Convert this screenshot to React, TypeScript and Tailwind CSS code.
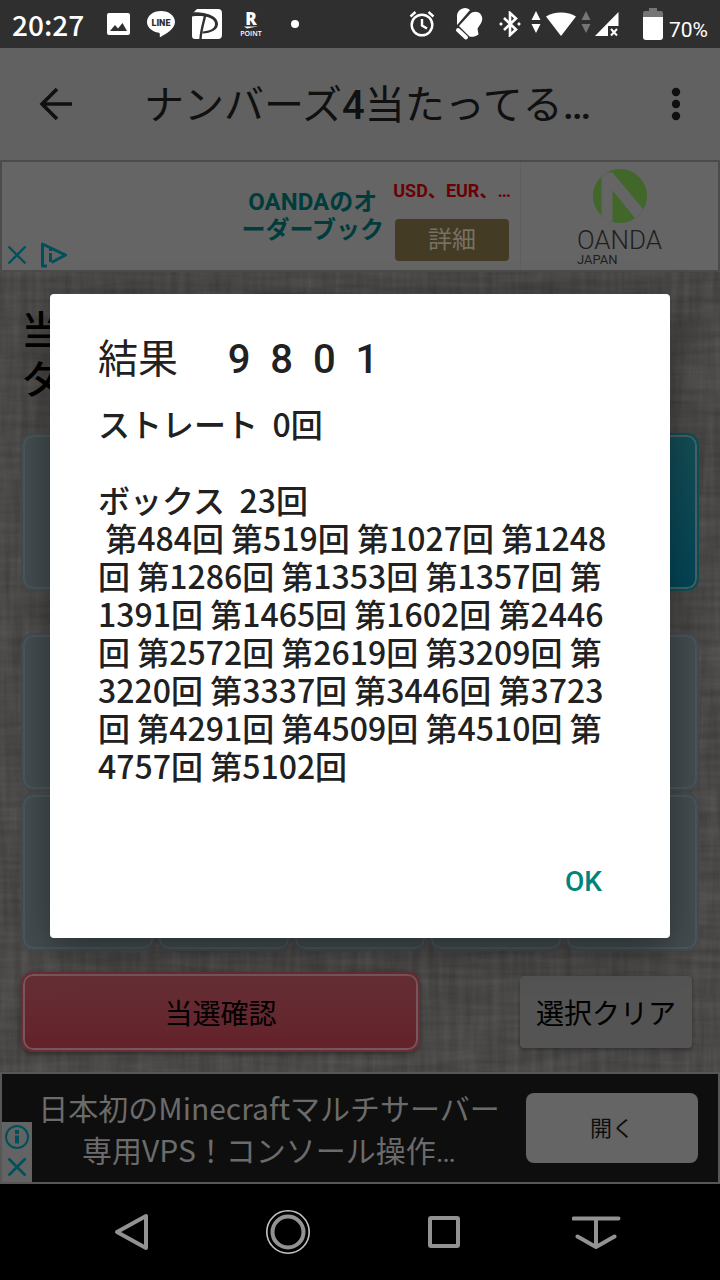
import React from 'react';

const DRAWS = [
  484, 519, 1027, 1248, 1286, 1353, 1357, 1391, 1465, 1602, 2446, 2572,
  2619, 3209, 3220, 3337, 3446, 3723, 4291, 4509, 4510, 4757, 5102,
];

const StatusBar = () => {
  return (
    <div className="flex h-12 items-center bg-[#2f2f2f] px-3 text-white">
      <span className="w-[94px] font-['Noto_Sans_CJK_JP',sans-serif] text-[28px] leading-9 font-medium">20:27</span>

      {/* Notifications */}
      <div className="flex items-center gap-4">
        <svg width="24" height="24" viewBox="0 0 24 24">
          <rect x="1" y="1" width="23" height="22" rx="2" fill="#fff" />
          <path d="M4 19l5-6 3 3.500 4.500-5.500L21 19z" fill="#2f2f2f" />
        </svg>
        <svg width="30" height="28" viewBox="0 0 30 28">
          <path d="M15 1C7 1 1 5.800 1 12c0 5.500 5 9.800 12 10.700 1 .3 1 1.500.7 3.600 0 .6.3.9.9.6C19 24.500 29 19 29 12 29 5.800 23 1 15 1z" fill="#fff" />
          <text x="15" y="15.500" textAnchor="middle" fontFamily="Roboto, sans-serif" fontWeight="900" fontSize="9" fill="#2f2f2f">LINE</text>
        </svg>
        <svg width="30" height="32" viewBox="0 0 30 32">
          <path d="M5 1h21a4 4 0 0 1 4 4v22a4 4 0 0 1-4 4H3a3 3 0 0 1-3-3V6z" fill="#fff" />
          <path d="M0 4.500c12-1 26 3 26 11.500 0 6-7 9-15.500 9.500v-2C17 23 23 21 23 16 23 9.500 11 7 0 8.500z" fill="#2f2f2f" />
          <path d="M13 8C11.500 15 9 22 8.500 31" fill="none" stroke="#2f2f2f" strokeWidth="2.400" />
        </svg>
        <svg width="26" height="32" viewBox="0 0 26 32">
          <text x="13" y="17" textAnchor="middle" fontFamily="Open Sans, sans-serif" fontWeight="800" fontSize="17" fill="#fff">R</text>
          <path d="M6 18.500h14l-11 2z" fill="#fff" />
          <text x="13" y="28" textAnchor="middle" fontFamily="Open Sans, sans-serif" fontWeight="600" fontSize="7" fill="#fff">POINT</text>
        </svg>
        <span className="ml-[11px] size-2 rounded-full bg-white" />
      </div>

      {/* System icons */}
      <div className="ml-auto flex items-center">
        <svg className="mr-5" width="26" height="28" viewBox="0 0 26 28" fill="none" stroke="#fff" strokeWidth="2.400">
          <circle cx="13" cy="15" r="10.300" />
          <path d="M13 9v6.500l5 3M1.500 6.500l5-4.500M24.500 6.500l-5-4.500" />
        </svg>
        <svg className="mr-4" width="28" height="34" viewBox="0 0 28 34" fill="#fff">
          <path d="M2 18V8a8 8 0 0 1 13-5L3 17z" />
          <path d="M4 19L15 7c3-3 8-3 10.500 0 2.500 3 2.200 7 0 10l-3 4.500 1 6c-3 2.500-7 2.500-9 2z" />
          <path d="M3 23l8 7.500" stroke="#fff" strokeWidth="4" strokeLinecap="round" />
        </svg>
        <svg className="mr-2.5" width="22" height="26" viewBox="0 0 22 26" fill="none" stroke="#fff" strokeWidth="2.600">
          <path d="M5 7l12 11.500-6 5.500V2l6 5.500L5 19" />
          <circle cx="2" cy="13" r="1.200" fill="#fff" strokeWidth="0.800" />
          <circle cx="20" cy="13" r="1.200" fill="#fff" strokeWidth="0.800" />
        </svg>
        <svg className="mr-1 -mt-1" width="10" height="22" viewBox="0 0 10 22" fill="#fff">
          <path d="M5 0l4.500 9h-9zM5 22l4.500-9h-9z" />
        </svg>
        <svg className="mr-1" width="32" height="26" viewBox="0 0 32 26" fill="#fff">
          <path d="M1 5.500C9 .2 23 .2 31 5.500L16 25z" />
        </svg>
        <svg className="mr-1 -mt-1" width="10" height="22" viewBox="0 0 10 22" fill="#757575">
          <path d="M5 0l4.500 9h-9zM5 22l4.500-9h-9z" />
        </svg>
        <svg className="mr-6" width="24" height="25" viewBox="0 0 24 25">
          <path d="M23.500 0v14H13v10H0z" fill="#fff" />
          <path d="M16 17l6 6.500M22 17l-6 6.500" stroke="#fff" strokeWidth="2" />
        </svg>
        <svg className="mr-1.5" width="20" height="32" viewBox="0 0 20 32">
          <path d="M6 0h8v3h4a2 2 0 0 1 2 2v5H0V5a2 2 0 0 1 2-2h4z" fill="#757575" />
          <path d="M0 9h20v20a3 3 0 0 1-3 3H3a3 3 0 0 1-3-3z" fill="#fff" />
        </svg>
        <span className="mt-3 font-[Roboto,sans-serif] text-[21px] leading-6">70%</span>
      </div>
    </div>
  );
};

const AppBar = () => {
  return (
    <header className="flex h-28 items-center bg-[#616161] pl-8 pr-5 text-[#101010]">
      <button aria-label="戻る" className="flex size-12 items-center justify-center">
        <svg width="34" height="34" viewBox="0 0 34 34" fill="none" stroke="currentColor" strokeWidth="3.600">
          <path d="M33 17H4M18 2L3 17l15 15" />
        </svg>
      </button>
      <h1 className="ml-16 grow truncate pt-1 font-[Roboto,'Noto_Sans_CJK_JP',sans-serif] text-[40px] leading-[56px]">
        ナンバーズ<span className="font-medium">4</span>当たってる<span className="font-medium">…</span>
      </h1>
      <button aria-label="メニュー" className="flex size-12 items-center justify-center">
        <svg width="10" height="34" viewBox="0 0 10 34" fill="currentColor">
          <circle cx="5" cy="5" r="4.200" />
          <circle cx="5" cy="17" r="4.200" />
          <circle cx="5" cy="29" r="4.200" />
        </svg>
      </button>
    </header>
  );
};

const TopAd = () => {
  return (
    <section className="flex h-28 border-2 border-[#4b4b4b] bg-[#656565] font-[Roboto,'Noto_Sans_CJK_JP',sans-serif]">
      <div className="flex items-end gap-3 pb-px pl-1 text-[#00505c]">
        <button aria-label="閉じる" className="py-1">
          <svg width="22" height="20" viewBox="0 0 22 20" fill="none" stroke="currentColor" strokeWidth="2.400">
            <path d="M2.500 1.500l17 17M19.500 1.500l-17 17" />
          </svg>
        </button>
        <button aria-label="広告について" className="pb-px">
          <svg width="28" height="26" viewBox="0 0 28 26" fill="none" stroke="currentColor" strokeWidth="3" strokeLinejoin="round">
            <path d="M7 24H2.500V2L25.500 13 11.500 20.500" />
            <path d="M10.500 11v9M10.500 6.500v2.500" strokeWidth="3" />
          </svg>
        </button>
      </div>
      <p className="ml-auto self-center text-center text-[24px] leading-7 font-bold text-[#003c3c]">
        OANDAのオ<br />ーダーブック
      </p>
      <div className="ml-2 flex w-[120px] flex-col items-center justify-center gap-4 pt-2">
        <span className="text-[18px] leading-6 font-bold whitespace-nowrap text-[#690004]">USD、EUR、…</span>
        <button className="h-[42px] w-[114px] rounded bg-[#443b25] text-[24px] leading-8 text-[#777164]">詳細</button>
      </div>
      <div className="ml-2 flex w-[198px] flex-col items-center border-l border-[#5f5f5f] pt-1.5 text-[#1f1f1f]">
        <svg className="mb-0.5" width="56" height="56" viewBox="0 0 56 56">
          <defs>
            <clipPath id="oanda">
              <circle cx="28" cy="28" r="27" />
            </clipPath>
          </defs>
          <g clipPath="url(#oanda)">
            <rect width="56" height="56" fill="#41672a" />
            <path d="M9.500 60V9L14 4.500h6.500L56 47l-9 8L20.500 22.500V60z" fill="#656565" />
          </g>
        </svg>
        <div className="flex flex-col">
          <span className="text-[26px] leading-7 font-light">OANDA</span>
          <span className="text-[13px] leading-3">JAPAN</span>
        </div>
      </div>
    </section>
  );
};

// Woven cloth behind the board
const Linen = () => {
  return (
    <svg className="absolute inset-0 size-full" preserveAspectRatio="none">
      <filter id="warp" x="0" y="0" width="100%" height="100%">
        <feTurbulence type="fractalNoise" baseFrequency="0.14 0.012" numOctaves="3" seed="4" />
        <feColorMatrix values="0 0 0 0 0  0 0 0 0 0  0 0 0 0 0  0.25 0 0 0 -0.05" />
      </filter>
      <filter id="weft" x="0" y="0" width="100%" height="100%">
        <feTurbulence type="fractalNoise" baseFrequency="0.012 0.14" numOctaves="3" seed="9" />
        <feColorMatrix values="0 0 0 0 0  0 0 0 0 0  0 0 0 0 0  0.25 0 0 0 -0.05" />
      </filter>
      <rect width="100%" height="100%" filter="url(#warp)" />
      <rect width="100%" height="100%" filter="url(#weft)" />
    </svg>
  );
};

const Tile = ({ active = false }: { active?: boolean }) => {
  return (
    <div
      className={
        active
          ? 'h-[158px] rounded-xl border-2 border-[#0b5156] bg-linear-to-b from-[#144e57] to-[#034657] shadow-[inset_0_0_0_2px_#4d6165]'
          : 'h-[158px] rounded-xl border-2 border-[#434d51] bg-[#444d50] shadow-[inset_0_0_0_2px_#4d585b]'
      }
    />
  );
};

const Board = () => {
  return (
    <main className="relative grow bg-[#575553] px-[21px] pb-[20px]">
      <Linen />
      <div className="relative">
        <p className="h-[161px] pt-8 font-['Noto_Sans_CJK_JP',sans-serif] text-[40px] leading-[49px] font-medium text-black">
          当<br />タ
        </p>
        <div className="grid grid-cols-5 gap-[2px]">
          <Tile />
          <Tile />
          <Tile />
          <Tile />
          <Tile active />
        </div>
        <div className="mt-[42px] grid grid-cols-5 gap-[2px]">
          {Array.from({ length: 10 }, (_, i) => (
            <Tile key={i} />
          ))}
        </div>
        <div className="mt-[21px] flex items-center justify-between pr-[7px] font-['Noto_Sans_CJK_JP',sans-serif] text-[28px] text-black">
          <button className="h-20 w-[399px] rounded-xl border-2 border-[#6a2c35] bg-linear-to-b from-[#652f35] to-[#64212a] shadow-[inset_0_0_0_2px_#76575b,0_2px_5px_rgba(0,0,0,0.4)]">
            当選確認
          </button>
          <button className="h-[72px] w-[172px] rounded bg-[#545454] shadow-[0_2px_4px_rgba(0,0,0,0.35)]">選択クリア</button>
        </div>
      </div>
    </main>
  );
};

const BottomAd = () => {
  return (
    <section className="flex h-28 items-center border-2 border-[#575757] bg-[#0e0e0e] pr-5 font-['Noto_Sans_CJK_JP',sans-serif]">
      <div className="flex h-[60px] w-[30px] shrink-0 flex-col items-center justify-between self-end bg-[#636363] py-[3px] text-[#00505c]">
        <button aria-label="広告について">
          <svg width="24" height="24" viewBox="0 0 24 24" fill="none" stroke="currentColor" strokeWidth="2">
            <circle cx="12" cy="12" r="11" />
            <path d="M12 10.500v8M12 5v4" strokeWidth="4" />
          </svg>
        </button>
        <button aria-label="閉じる">
          <svg width="24" height="24" viewBox="0 0 24 24" fill="none" stroke="currentColor" strokeWidth="2.600">
            <path d="M3.500 3.500l17 17M20.500 3.500l-17 17" />
          </svg>
        </button>
      </div>
      <p className="grow pr-5 pt-0.5 text-center text-[30px] leading-[42px] whitespace-nowrap text-[#6b6b6b]">
        日本初のMinecraftマルチサーバー<br />専用VPS！コンソール操作<span className="font-[Roboto,sans-serif]">…</span>
      </p>
      <button className="h-[70px] w-[172px] shrink-0 rounded-lg bg-[#656565] pb-1 text-[22px] text-[#0e0e0e]">開く</button>
    </section>
  );
};

const NavBar = () => {
  return (
    <nav className="grid h-24 grid-cols-4 items-center bg-black pl-[54px] pr-[42px] text-[#929292]">
      <button aria-label="戻る" className="flex justify-center">
        <svg width="48" height="48" viewBox="0 0 48 48" fill="none" stroke="currentColor" strokeWidth="4" strokeLinejoin="round">
          <path d="M38 8v32L9 24z" />
        </svg>
      </button>
      <button aria-label="ホーム" className="flex justify-center">
        <svg width="48" height="48" viewBox="0 0 48 48" fill="none" stroke="currentColor">
          <circle cx="24" cy="24" r="21.200" strokeWidth="1.600" stroke="#c4c4c4" />
          <circle cx="24" cy="24" r="15.500" strokeWidth="4" />
        </svg>
      </button>
      <button aria-label="履歴" className="flex justify-center">
        <svg width="48" height="48" viewBox="0 0 48 48" fill="none" stroke="currentColor" strokeWidth="4">
          <rect x="10" y="10" width="28" height="28" rx="1" />
        </svg>
      </button>
      <button aria-label="バーを隠す" className="flex justify-center">
        <svg width="56" height="48" viewBox="0 0 56 48" fill="none" stroke="currentColor" strokeWidth="4" strokeLinecap="round" strokeLinejoin="round">
          <path d="M1.500 10.500h45M24 11v28M5.500 28.500L24 39l18.500-10.500" />
        </svg>
      </button>
    </nav>
  );
};

const ResultDialog = () => {
  return (
    <div className="absolute inset-x-0 top-12 bottom-24 flex items-center justify-center px-[50px]">
      <div
        role="dialog"
        aria-labelledby="result-title"
        className="w-full rounded bg-white px-12 pt-[42px] pb-5 text-[#212121] shadow-[0_12px_40px_rgba(0,0,0,0.4)]"
      >
        <h2 id="result-title" className="font-[Roboto,'Noto_Sans_CJK_JP',sans-serif] text-[40px] leading-[48px] whitespace-pre">
          結果<span className="font-medium">{'     9  8  0  1'}</span>
        </h2>
        <p className="mt-5 font-['Noto_Sans_CJK_JP',sans-serif] text-[32px] leading-[38px] font-medium whitespace-pre-wrap">
          {'ストレート  0回\n\nボックス  23回\n ' + DRAWS.map((n) => `第${n}回`).join(' ')}
        </p>
        <div className="mt-[62px] flex justify-end">
          <button className="h-[72px] px-5 font-[Roboto,sans-serif] text-[28px] font-medium text-[#00857a]">OK</button>
        </div>
      </div>
    </div>
  );
};

const App = () => {
  return (
    <div className="relative flex min-h-screen flex-col bg-black">
      <StatusBar />
      <AppBar />
      <TopAd />
      <Board />
      <BottomAd />
      <NavBar />
      <ResultDialog />
    </div>
  );
};

export default App;
